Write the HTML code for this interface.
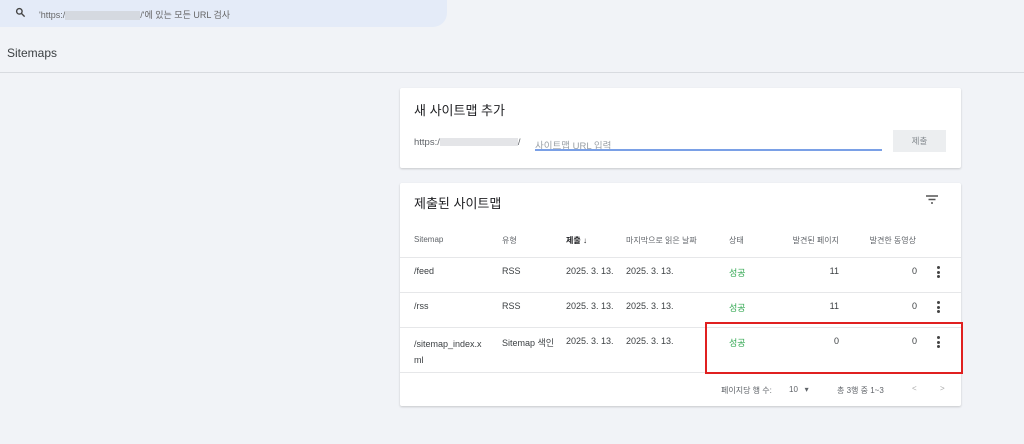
<!DOCTYPE html>
<html><head><meta charset="utf-8"><style>
body{margin:0;width:1024px;height:444px;background:#f1f3f7;font-family:"Liberation Sans","Noto Sans CJK KR",sans-serif;position:relative;overflow:hidden;color:#3c4043}
.a{position:absolute;white-space:nowrap}
.card{position:absolute;background:#fff;box-shadow:0 1px 2px rgba(0,0,0,.18);border-radius:2px}
.h{font-size:8px;color:#5f6368}
.t{font-size:9px;color:#3c4043}
.g{font-size:9px;color:#34a853}
.line{position:absolute;left:400px;width:561px;height:1px;background:#e6e7e9}
.dots{position:absolute;width:3px}
.dots i{display:block;width:3px;height:3px;border-radius:50%;background:#444;margin-bottom:1.5px}
</style></head><body>
<div class="a" style="left:0;top:0;width:447px;height:27px;background:#e4ebf8;border-radius:0 0 14px 0"></div>
<svg class="a" style="left:15px;top:7px" width="11" height="11" viewBox="0 0 24 24"><circle cx="9.5" cy="9.5" r="6" fill="none" stroke="#444" stroke-width="3"/><path d="M14 14l7 7" stroke="#444" stroke-width="3"/></svg>
<div class="a" style="left:39px;top:8px;font-size:9px;color:#666">'https:/<span style="display:inline-block;width:75px;height:9px;background:#d5d9e0;vertical-align:middle"></span>/'에 있는 모든 URL 검사</div>
<div class="a" style="left:7px;top:46px;font-size:12px;color:#3c4043">Sitemaps</div>
<div class="a" style="left:0;top:72px;width:1024px;height:1px;background:#d8dbe0"></div>

<div class="card" style="left:400px;top:88px;width:561px;height:80px"></div>
<div class="a" style="left:414px;top:100px;font-size:13px;color:#202124">새 사이트맵 추가</div>
<div class="a" style="left:414px;top:137px;font-size:9.5px;color:#5f6368">https:/<span style="display:inline-block;width:78px;height:8px;background:#e4e5e8;vertical-align:middle"></span>/</div>
<div class="a" style="left:535px;top:138px;font-size:9.5px;color:#9aa0a6">사이트맵 URL 입력</div>
<div class="a" style="left:535px;top:149px;width:347px;height:1.5px;background:#7aa0e6"></div>
<div class="a" style="left:893px;top:130px;width:53px;height:22px;background:#eceef0;font-size:8.5px;color:#80868b;text-align:center;line-height:22px">제출</div>

<div class="card" style="left:400px;top:183px;width:561px;height:223px"></div>
<div class="a" style="left:414px;top:193px;font-size:13px;color:#202124">제출된 사이트맵</div>
<svg class="a" style="left:926px;top:195px" width="12" height="9" viewBox="0 0 12 9"><path d="M0 1h12M2.5 4.5h7M5 8h2" stroke="#555" stroke-width="1.4"/></svg>
<div class="a h" style="left:414px;top:235px">Sitemap</div>
<div class="a h" style="left:502px;top:235px">유형</div>
<div class="a h" style="left:566px;top:235px;color:#202124;font-weight:bold">제출 ↓</div>
<div class="a h" style="left:626px;top:235px">마지막으로 읽은 날짜</div>
<div class="a h" style="left:729px;top:235px">상태</div>
<div class="a h" style="left:790px;top:235px;width:49px;text-align:right">발견된 페이지</div>
<div class="a h" style="left:866px;top:235px;width:50px;text-align:right">발견한 동영상</div>
<div class="line" style="top:257px"></div>
<div class="line" style="top:292px"></div>
<div class="line" style="top:327px"></div>
<div class="line" style="top:372px"></div>

<div class="a t" style="left:414px;top:266px">/feed</div><div class="a t" style="left:502px;top:266px">RSS</div><div class="a t" style="left:566px;top:266px">2025. 3. 13.</div><div class="a t" style="left:626px;top:266px">2025. 3. 13.</div><div class="a g" style="left:729px;top:266px">성공</div><div class="a t" style="left:800px;top:266px;width:39px;text-align:right">11</div><div class="a t" style="left:880px;top:266px;width:37px;text-align:right">0</div>
<div class="dots" style="left:937px;top:266px"><i></i><i></i><i></i></div>
<div class="a t" style="left:414px;top:301px">/rss</div><div class="a t" style="left:502px;top:301px">RSS</div><div class="a t" style="left:566px;top:301px">2025. 3. 13.</div><div class="a t" style="left:626px;top:301px">2025. 3. 13.</div><div class="a g" style="left:729px;top:301px">성공</div><div class="a t" style="left:800px;top:301px;width:39px;text-align:right">11</div><div class="a t" style="left:880px;top:301px;width:37px;text-align:right">0</div>
<div class="dots" style="left:937px;top:301px"><i></i><i></i><i></i></div>
<div class="a t" style="left:414px;top:336px;line-height:16px">/sitemap_index.x<br>ml</div><div class="a t" style="left:502px;top:336px">Sitemap 색인</div><div class="a t" style="left:566px;top:336px">2025. 3. 13.</div><div class="a t" style="left:626px;top:336px">2025. 3. 13.</div><div class="a g" style="left:729px;top:336px">성공</div><div class="a t" style="left:800px;top:336px;width:39px;text-align:right">0</div><div class="a t" style="left:880px;top:336px;width:37px;text-align:right">0</div>
<div class="dots" style="left:937px;top:336px"><i></i><i></i><i></i></div>

<div class="a h" style="left:721px;top:385px">페이지당 행 수:</div>
<div class="a h" style="left:789px;top:385px">10 &nbsp;&nbsp;▾</div>
<div class="a h" style="left:837px;top:385px">총 3행 중 1~3</div>
<div class="a h" style="left:912px;top:384px;color:#aaa">&lt;</div>
<div class="a h" style="left:940px;top:384px;color:#aaa">&gt;</div>

<div class="a" style="left:705px;top:322px;width:254px;height:48px;border:2px solid #e02020"></div>
</body></html>
